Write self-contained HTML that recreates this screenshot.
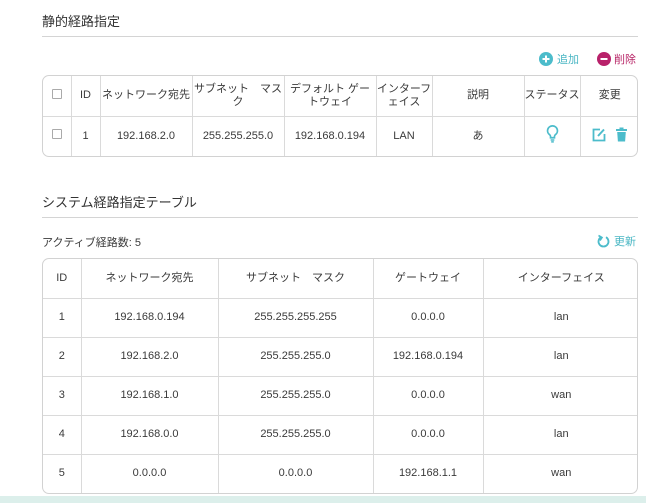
<!DOCTYPE html>
<html><head><meta charset="utf-8"><style>
*{margin:0;padding:0;box-sizing:border-box}
body{width:646px;height:503px;background:#fff;font-family:"Liberation Sans","Noto Sans CJK JP",sans-serif;font-size:11px;color:#3a3a3a;position:relative;overflow:hidden}
.a{position:absolute}
.title{font-size:13px;color:#333}
.line{height:1px;background:#d4d4d4;left:42px;width:596px}
.box{border:1px solid #d2d2d2;border-radius:7px;overflow:hidden;left:42px;width:596px}
table{border-collapse:collapse;width:100%;table-layout:fixed}
td{border:1px solid #dadada;text-align:center;vertical-align:middle;line-height:13px;color:#3a3a3a}
tr:first-child td{border-top:none}tr:last-child td{border-bottom:none}
td:first-child{border-left:none}td:last-child{border-right:none}
.t1 td{height:40px}
.t2 td{height:39px}
.cb{display:inline-block;width:10px;height:10px;border:1px solid #aaa;border-radius:1px}
</style></head><body>
<div class="a title" style="left:42px;top:11px">静的経路指定</div>
<div class="a line" style="top:36px"></div>
<div class="a" style="left:539px;top:51px;color:#4bb7c4;display:flex;align-items:center">
<svg width="14" height="14" viewBox="0 0 14 14"><circle cx="7" cy="7" r="7" fill="#4cbccb"/><path d="M7 3.5v7M3.5 7h7" stroke="#fff" stroke-width="2"/></svg><span style="margin-left:4px">追加</span></div>
<div class="a" style="left:597px;top:51px;color:#b82667;display:flex;align-items:center">
<svg width="14" height="14" viewBox="0 0 14 14"><circle cx="7" cy="7" r="7" fill="#b8216a"/><path d="M3.5 7h7" stroke="#fff" stroke-width="2"/></svg><span style="margin-left:3px">削除</span></div>
<div class="a box" style="top:75px">
<table class="t1"><colgroup><col style="width:28px"><col style="width:29px"><col style="width:92px"><col style="width:92px"><col style="width:92px"><col style="width:56px"><col style="width:92px"><col style="width:56px"><col style="width:59px"></colgroup>
<tr><td><span class="cb"></span></td><td>ID</td><td>ネットワーク宛先</td><td>サブネット　マスク</td><td>デフォルト ゲートウェイ</td><td>インターフェイス</td><td>説明</td><td>ステータス</td><td>変更</td></tr>
<tr><td><span class="cb"></span></td><td>1</td><td>192.168.2.0</td><td>255.255.255.0</td><td>192.168.0.194</td><td>LAN</td><td>あ</td>
<td><svg width="13" height="20" viewBox="0 0 12 18"><path d="M6 1.5a4.5 4.5 0 0 0-2.6 8.2c.5.4.8 1 .8 1.6v1.2h3.6v-1.2c0-.6.3-1.2.8-1.6A4.5 4.5 0 0 0 6 1.5z" fill="none" stroke="#4cbccb" stroke-width="1.6"/><path d="M4.3 14.5h3.4M4.8 16.3h2.4" stroke="#4cbccb" stroke-width="1.4"/></svg></td>
<td><svg width="14" height="14" viewBox="0 0 14 14" style="margin-right:10px"><path d="M8 1.5H1.5v11h11V6" fill="none" stroke="#4cbccb" stroke-width="1.8"/><path d="M6 8l6-6.5" stroke="#4cbccb" stroke-width="2"/></svg><svg width="11" height="15" viewBox="0 0 11 14"><rect x="0" y="1.5" width="11" height="2" fill="#4cbccb"/><rect x="3.5" y="0" width="4" height="2" fill="#4cbccb"/><path d="M1.2 4.5h8.6l-.7 9.5H1.9z" fill="#4cbccb"/></svg></td></tr>
</table></div>
<div class="a title" style="left:42px;top:192px">システム経路指定テーブル</div>
<div class="a line" style="top:217px"></div>
<div class="a" style="left:42px;top:234px">アクティブ経路数: 5</div>
<div class="a" style="left:597px;top:233px;color:#4bb7c4;display:flex;align-items:center">
<svg width="13" height="14" viewBox="0 0 13 14"><path d="M4 3.2A5 5 0 1 0 9 3.2" fill="none" stroke="#4cbccb" stroke-width="1.8"/><path d="M1.5 1.5L5 3.5 3 6.5" fill="none" stroke="#4cbccb" stroke-width="1.6"/></svg><span style="margin-left:4px">更新</span></div>
<div class="a box" style="top:258px">
<table class="t2"><colgroup><col style="width:38px"><col style="width:137px"><col style="width:155px"><col style="width:110px"><col style="width:156px"></colgroup>
<tr><td>ID</td><td>ネットワーク宛先</td><td>サブネット　マスク</td><td>ゲートウェイ</td><td>インターフェイス</td></tr>
<tr><td>1</td><td>192.168.0.194</td><td>255.255.255.255</td><td>0.0.0.0</td><td>lan</td></tr>
<tr><td>2</td><td>192.168.2.0</td><td>255.255.255.0</td><td>192.168.0.194</td><td>lan</td></tr>
<tr><td>3</td><td>192.168.1.0</td><td>255.255.255.0</td><td>0.0.0.0</td><td>wan</td></tr>
<tr><td>4</td><td>192.168.0.0</td><td>255.255.255.0</td><td>0.0.0.0</td><td>lan</td></tr>
<tr><td>5</td><td>0.0.0.0</td><td>0.0.0.0</td><td>192.168.1.1</td><td>wan</td></tr>
</table></div>
<div class="a" style="left:0;top:496px;width:646px;height:7px;background:#dcefeb"></div>
</body></html>
